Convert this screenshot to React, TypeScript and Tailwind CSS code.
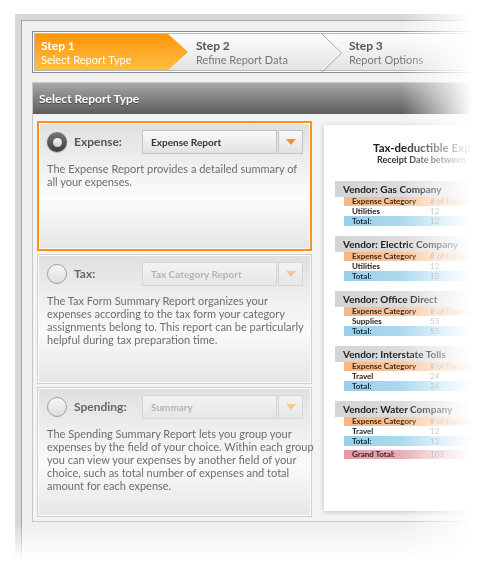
import React from "react";

type CardProps = {
  selected?: boolean;
  label: string;
  value: string;
  lines: string[];
};

const vendors = [
  { name: "Gas Company", category: "Utilities", count: "12" },
  { name: "Electric Company", category: "Utilities", count: "12" },
  { name: "Office Direct", category: "Supplies", count: "55" },
  { name: "Interstate Tolls", category: "Travel", count: "24" },
  { name: "Water Company", category: "Travel", count: "12" },
];

function Radio({ on }: { on?: boolean }) {
  if (on) {
    return (
      <div className="flex h-[20px] w-[20px] shrink-0 items-center justify-center rounded-full bg-linear-to-b from-[#7a7a7a] to-[#3c3c3c] shadow-[0_1px_1px_rgba(0,0,0,0.25)]">
        <div className="h-[9px] w-[9px] rounded-full bg-linear-to-b from-[#f4f4f4] to-[#cdcdcd]" />
      </div>
    );
  }
  return <div className="h-[20px] w-[20px] shrink-0 rounded-full border border-[#9e9e9e] bg-linear-to-b from-[#f8f8f8] to-[#dcdcdc]" />;
}

function Caret({ on }: { on?: boolean }) {
  return (
    <svg width="10" height="6" viewBox="0 0 10 6">
      <path d="M0 0h10L5 6z" fill={on ? "#f7931e" : "#f6c595"} />
    </svg>
  );
}

function ReportCard({ selected, label, value, lines }: CardProps) {
  return (
    <div className={selected ? "h-[130px] w-[275px] border-2 border-[#f7931e]" : "h-[130px] w-[275px] border border-[#d0d0d0]"}>
      <div
        className={
          selected
            ? "h-full border border-[#f7f7f7] bg-linear-to-b from-[#e0e0e0] via-[#fcfcfc] via-60% to-[#e6e6e6] pl-[7px] pt-[6px]"
            : "h-full border border-[#fafafa] bg-linear-to-b from-[#e0e0e0] via-[#fafafa] via-60% to-[#e6e6e6] pl-[8px] pt-[6px]"
        }
      >
        <div className="flex h-[24px] items-center">
          <Radio on={selected} />
          <div className={selected ? "ml-[7px] w-[68px] text-[12px] font-bold text-[#555]" : "ml-[7px] w-[68px] text-[12px] font-bold text-[#666]"}>
            {label}
          </div>
          <div
            className={
              selected
                ? "flex h-[24px] w-[135px] items-center border border-[#c4c4c4] bg-linear-to-b from-[#fafafa] to-[#e2e2e2] pl-[8px] text-[10px] font-bold text-[#333]"
                : "flex h-[24px] w-[135px] items-center border border-[#d6d6d6] bg-linear-to-b from-[#f3f3f3] to-[#e6e6e6] pl-[8px] text-[10px] font-bold text-[#b4b4b4]"
            }
          >
            {value}
          </div>
          <div
            className={
              selected
                ? "ml-px flex h-[24px] w-[25px] items-center justify-center border border-[#c4c4c4] bg-linear-to-b from-[#fafafa] to-[#e2e2e2]"
                : "ml-px flex h-[24px] w-[25px] items-center justify-center border border-[#d6d6d6] bg-linear-to-b from-[#f3f3f3] to-[#e6e6e6]"
            }
          >
            <Caret on={selected} />
          </div>
        </div>
        <div className="mt-[8px] whitespace-nowrap text-[11px] leading-[13px] text-[#6e6e6e]">
          {lines.map((l) => (
            <div key={l}>{l}</div>
          ))}
        </div>
      </div>
    </div>
  );
}

function VendorBlock({ name, category, count, last }: { name: string; category: string; count: string; last?: boolean }) {
  return (
    <div className={last ? "" : "mb-[10px]"}>
      <div className="h-[16px] bg-linear-to-r from-[#d4d4d4] to-[#ececec] pl-[8px] text-[10px] font-bold leading-[16px] text-[#222]">
        Vendor: {name}
      </div>
      <div className="ml-[9px] flex h-[9px] bg-linear-to-r from-[#f7b682] to-[#fde7d5] text-[8px] leading-[9px]">
        <span className="w-[86px] pl-[8px] font-bold text-[#3a2a1a]">Expense Category</span>
        <span className="text-[#a89a8e]"># of Expenses</span>
      </div>
      <div className="ml-[9px] flex h-[10px] text-[8px] leading-[10px]">
        <span className="w-[86px] pl-[8px] font-bold text-[#222]">{category}</span>
        <span className="text-[#999]">{count}</span>
      </div>
      <div className="ml-[9px] flex h-[10px] bg-linear-to-r from-[#98d0ea] to-[#d4edf8] text-[8px] leading-[10px]">
        <span className="w-[86px] pl-[8px] font-bold text-[#1e2a33]">Total:</span>
        <span className="text-[#8a9aa3]">{count}</span>
      </div>
    </div>
  );
}

function ReportPreview() {
  return (
    <div className="mt-[4px] h-[386px] w-[200px] shrink-0 bg-white shadow-[0_1px_5px_rgba(0,0,0,0.22)]">
      <div className="whitespace-nowrap pl-[49px] pt-[17px] text-[11.5px] font-bold leading-[12px] text-[#222]">Tax-deductible Expenses</div>
      <div className="whitespace-nowrap pl-[53px] pt-[1px] text-[9px] font-bold leading-[10px] text-[#333]">Receipt Date between</div>
      <div className="ml-[11px] mt-[16px]">
        {vendors.map((v, i) => (
          <VendorBlock key={v.name} {...v} last={i === vendors.length - 1} />
        ))}
        <div className="ml-[9px] mt-[4px] flex h-[9px] bg-linear-to-r from-[#e09aa4] to-[#f6dde0] text-[8px] leading-[9px]">
          <span className="w-[86px] pl-[8px] font-bold text-[#3a2025]">Grand Total:</span>
          <span className="text-[#a08c8f]">103</span>
        </div>
      </div>
    </div>
  );
}

function StepBar() {
  return (
    <div className="w-[500px] border border-[#8e8e8e] bg-white p-px">
      <div className="flex h-[38px] border border-[#b9b9b9] bg-linear-to-b from-[#fdfdfd] to-[#e3e3e3]">
        <div className="w-[153px] shrink-0 bg-linear-to-b from-[#ff9500] to-[#ffbd3d] pl-[6px] pt-[4px] text-white [clip-path:polygon(0_0,133px_0,100%_50%,133px_100%,0_100%)]">
          <div className="text-[12px] font-bold leading-[15px]">Step 1</div>
          <div className="text-[11px] leading-[14px]">Select Report Type</div>
        </div>
        <div className="flex w-[154px] shrink-0">
          <div className="w-[134px] pl-[8px] pt-[4px]">
            <div className="text-[12px] font-bold leading-[15px] text-[#555]">Step 2</div>
            <div className="text-[11px] leading-[14px] text-[#777]">Refine Report Data</div>
          </div>
          <svg width="20" height="38" viewBox="0 0 20 38" className="shrink-0">
            <polyline points="0,0 19.5,19 0,38" fill="none" stroke="#a2a2a2" strokeWidth="1" />
            <polyline points="-1,1 18,19 -1,37" fill="none" stroke="#ffffff" strokeWidth="1" />
          </svg>
        </div>
        <div className="pl-[7px] pt-[4px]">
          <div className="text-[12px] font-bold leading-[15px] text-[#555]">Step 3</div>
          <div className="text-[11px] leading-[14px] text-[#777]">Report Options</div>
        </div>
      </div>
    </div>
  );
}

export default function App() {
  return (
    <div className="h-[571px] w-[490px] overflow-hidden bg-white font-[Lato,sans-serif]">
      <div className="[mask-image:linear-gradient(to_bottom,black_524px,transparent_560px)]">
        <div className="pl-[15px] pt-[14px] [mask-image:linear-gradient(to_right,black_402px,transparent_472px)]">
          <div className="h-[620px] w-[520px] bg-[#d8d8d8] p-[6px]">
            <div className="h-full border border-[#a6a6a6] bg-[#efefef] pl-[10px] pt-[10px]">
              <StepBar />

              <div className="mt-[9px] w-[500px] border border-[#c6c6c6] bg-[#f3f3f3]">
                <div className="flex h-[31px] items-center bg-linear-to-b from-[#a9a9a9] to-[#5c5c5c] pl-[6px] text-[12px] font-bold text-white [text-shadow:0_1px_1px_rgba(0,0,0,0.45)]">
                  Select Report Type
                </div>
                <div className="flex gap-[12px] pb-[4px] pl-[4px] pt-[7px]">
                  <div className="flex flex-col gap-[3px]">
                    <ReportCard
                      selected
                      label="Expense:"
                      value="Expense Report"
                      lines={["The Expense Report provides a detailed summary of", "all your expenses."]}
                    />
                    <ReportCard
                      label="Tax:"
                      value="Tax Category Report"
                      lines={[
                        "The Tax Form Summary Report organizes your",
                        "expenses according to the tax form your category",
                        "assignments belong to. This report can be particularly",
                        "helpful during tax preparation time.",
                      ]}
                    />
                    <ReportCard
                      label="Spending:"
                      value="Summary"
                      lines={[
                        "The Spending Summary Report lets you group your",
                        "expenses by the field of your choice. Within each group",
                        "you can view your expenses by another field of your",
                        "choice, such as total number of expenses and total",
                        "amount for each expense.",
                      ]}
                    />
                  </div>
                  <ReportPreview />
                </div>
              </div>
            </div>
          </div>
        </div>
      </div>
    </div>
  );
}
